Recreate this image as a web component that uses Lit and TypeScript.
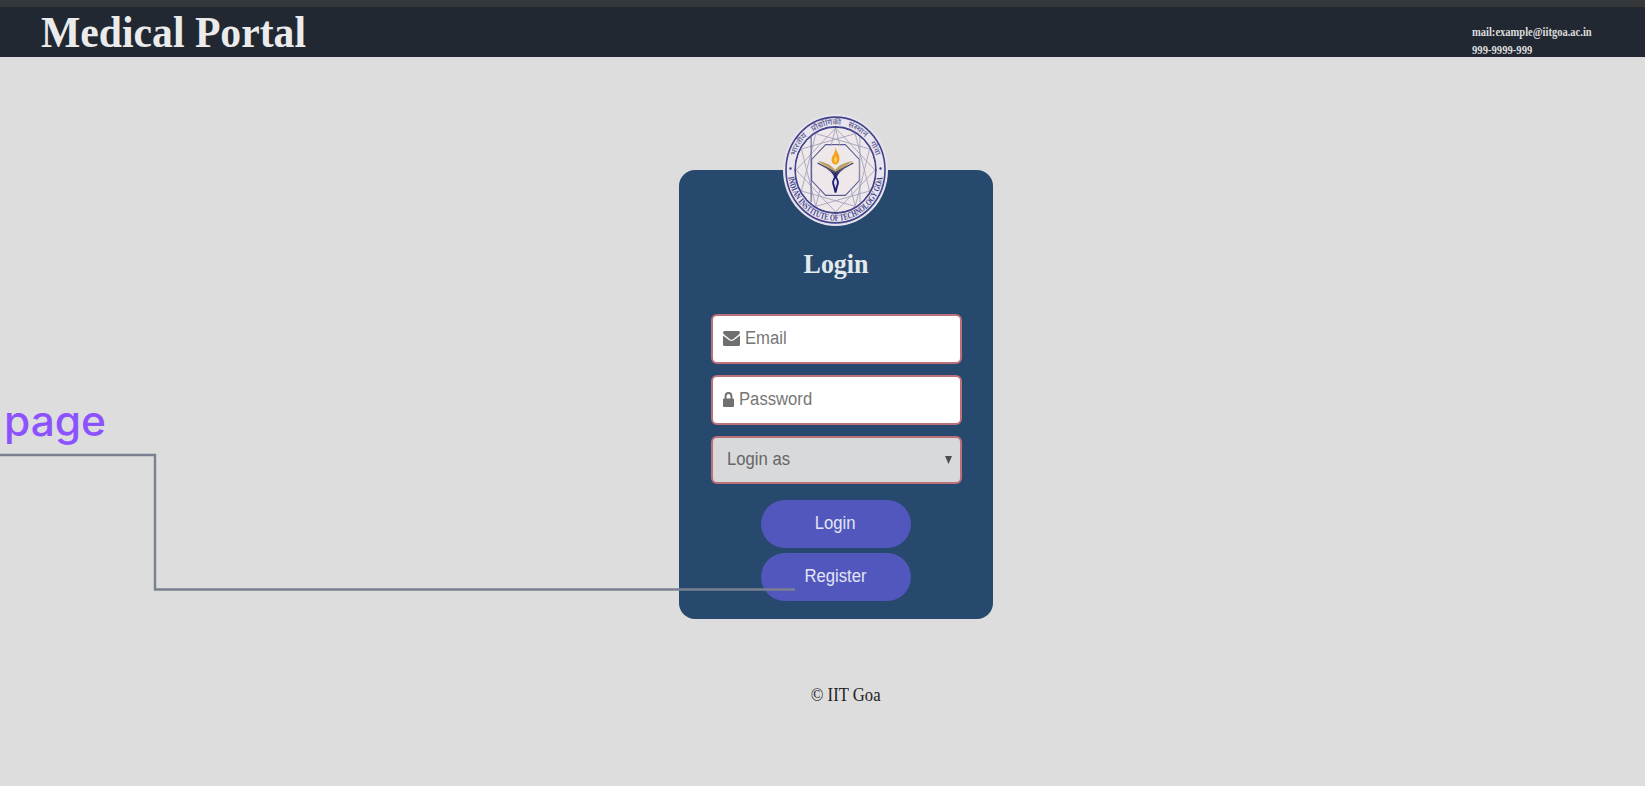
import { LitElement, html, css, svg } from "lit";
import { customElement } from "lit/decorators.js";

const star = (r: number, n: number, off: number) => {
  const p: string[] = [];
  for (let i = 0; i < n; i++) {
    const a = ((off + i * (360 / n)) * Math.PI) / 180;
    p.push(`${(r * Math.sin(a)).toFixed(2)},${(-r * Math.cos(a)).toFixed(2)}`);
  }
  return p.join(" ");
};

@customElement("institute-seal")
class InstituteSeal extends LitElement {
  static styles = css`
    :host { display: block; width: 105px; height: 112px; }
    svg { display: block; width: 100%; height: 100%; }
    .ring { fill: none; stroke: #43438a; }
    .web { fill: none; stroke: #a3a1b8; stroke-width: 0.9; }
    .octagon { fill: none; stroke: #5a5a90; stroke-width: 1.1; }
    .legend { font-family: "Liberation Serif", serif; font-weight: bold; font-size: 9.2px; fill: #42428a; }
    .hindi { font-family: "Noto Sans Devanagari", "Noto Sans", sans-serif; font-size: 8px; font-weight: 500; word-spacing: 5px; fill: #5a5a94; }
  `;
  render() {
    return html`<svg viewBox="-56 -56 112 112" preserveAspectRatio="none">
      <circle r="56" fill="#e6e3ec" />
      <circle r="52.8" fill="#e9e5ee" />
      <circle class="ring" r="52.8" stroke-width="1.7" />
      <circle class="ring" r="43" stroke-width="1.9" />
      <circle r="42" fill="#eee8eb" />
      ${svg`
        <polygon class="web" points="${star(42, 4, 0)}" />
        <polygon class="web" points="${star(42, 4, 30)}" />
        <polygon class="web" points="${star(42, 4, 60)}" />
        <polygon class="octagon" points="${star(27.5, 8, 22.5)}" />
      `}
      <path class="web" d="M0-42L-21 36M0-42L21 36" />
      <path class="octagon" d="M-26-33V32" />
      <path class="web" d="M26-33V32" />
      <circle r="24.5" fill="#eee8eb" />
      <path d="M-19-9C-12-8-5-6-.5 0C4-6 12-8 19-9L0 3Z" fill="#bca266" />
      <path d="M-19-7L0 2.500L19-7" fill="none" stroke="#34345f" stroke-width="1.300" />
      <path d="M-14-3Q-3 1-1.300 8H1.300Q3 1 14-3L0 3Z" fill="#30306d" />
      <path d="M0 6.500C3.200 11 3.200 13 1.500 16.500L0 22.500L-1.500 16.500C-3.200 13-3.200 11 0 6.500Z" fill="#e3dfed" stroke="#1f1f75" stroke-width="2" />
      <path d="M0-22.500C1-18 4.600-16 4.200-10.500C3.800-7.500 2-5.500 0-5.500C-2.500-5.500-4.200-8-4.200-10.500C-4.200-14-.5-16 0-22.500Z" fill="#f4a21e" />
      <path d="M0-14C2-11 2-9 0-7C-2-9-2-11 0-14Z" fill="#fbd45c" />
      <circle cx="-48" cy="-1.500" r="1.200" fill="#37377c" />
      <circle cx="48" cy="-1.500" r="1.200" fill="#37377c" />
      <path id="top" d="M-45.400 0A45.400 45.400 0 0 1 45.400 0" fill="none" />
      <path id="bottom" d="M-50.800 0A50.800 50.800 0 0 0 50.800 0" fill="none" />
      <text class="hindi"><textPath href="#top" startOffset="14" textLength="114" lengthAdjust="spacingAndGlyphs">भारतीय प्रौद्योगिकी संस्थान गोवा</textPath></text>
      <text class="legend"><textPath href="#bottom" startOffset="7" textLength="145" lengthAdjust="spacingAndGlyphs">INDIAN INSTITUTE OF TECHNOLOGY GOA</textPath></text>
    </svg>`;
  }
}

@customElement("app-root")
class AppRoot extends LitElement {
  static styles = css`
    :host { display: block; }
    * { box-sizing: border-box; }
    .page { position: relative; height: 786px; overflow: hidden; background: #dddddd; display: flex; flex-direction: column; font-family: "Liberation Serif", serif; }
    .strip { height: 7px; background: #34383a; flex: none; }
    .header { height: 50px; flex: none; background: #212832; color: #ebebeb; display: flex; justify-content: space-between; padding: 0 52px 0 41px; }
    .t { display: inline-block; white-space: nowrap; transform: scaleX(0.926); }
    .left { transform-origin: left; }
    .title { margin: 0; font-size: 45px; line-height: 50px; font-weight: bold; }
    .contact { width: 121px; padding-top: 16px; font-size: 11.5px; font-weight: bold; line-height: 18px; display: flex; flex-direction: column; align-items: flex-start; color: #dcdcdc; }
    .mail { transform: scaleX(0.915); }
    .card { width: 314px; height: 449px; margin: 112.5px 0 0 678.5px; flex: none; background: #26496d; border-radius: 16px; display: flex; flex-direction: column; align-items: center; }
    .seal { margin-top: -56px; flex: none; }
    .heading { margin: 20px 0 0 1px; font-size: 28px; line-height: 36px; color: #e4e9ee; }
    .form { width: 251px; margin: 32px 0 0 1px; display: flex; flex-direction: column; gap: 11px; font-family: "Liberation Sans", sans-serif; font-size: 18px; color: #767676; }
    .field { height: 50px; background: #fff; border: 2px solid #bd7079; border-radius: 6px; display: flex; align-items: center; padding: 0 8px 1px 10px; }
    .field svg { flex: none; display: block; }
    .field .t { margin-left: 5px; }
    .select { height: 48px; background: #d8d9db; justify-content: space-between; padding: 0 8px 0 14px; color: #666; }
    .field.select .t { margin-left: 0; }
    .actions { margin-top: 16px; display: flex; flex-direction: column; gap: 5px; }
    .btn { width: 150px; height: 48px; border: 0; padding: 0 0 1px; border-radius: 24px; background: #5157bd; color: #e3e5f5; font: 18px "Liberation Sans", sans-serif; }
    .footer { margin-top: 65px; padding-left: 46px; text-align: center; font-size: 18px; line-height: 22px; color: #222; }
    .note { position: absolute; left: 4px; top: 395px; font: 500 41px/52px Inter, sans-serif; color: #8c52ff; transform: scaleX(1.035); transform-origin: left; }
    .wire { position: absolute; left: 0; top: 450px; pointer-events: none; }
  `;
  render() {
    return html`<div class="page">
      <div class="strip"></div>
      <header class="header">
        <h1 class="title"><span class="t left">Medical Portal</span></h1>
        <div class="contact"><span class="t left mail">mail:example@iitgoa.ac.in</span><span class="t left">999-9999-999</span></div>
      </header>
      <main class="card">
        <institute-seal class="seal"></institute-seal>
        <h2 class="heading"><span class="t">Login</span></h2>
        <div class="form">
          <label class="field">
            <svg width="17" height="15" viewBox="0 0 17 15"><path fill="#6f6f6f" d="M1.500 0h14Q17 0 17 1.500Q16.500 3.200 15 4.300L10 8.200Q8.500 9.300 7 8.200L2 4.300Q.3 3.100 0 1.500Q0 0 1.500 0ZM0 4.400L6.200 9.300Q8.500 10.900 10.800 9.300L17 4.400V13.500Q17 15 15.500 15H1.500Q0 15 0 13.500Z"/></svg>
            <span class="t left">Email</span>
          </label>
          <label class="field">
            <svg width="11" height="15" viewBox="0 0 11 15"><path fill="#6f6f6f" fill-rule="evenodd" d="M1.600 6.500V4.300A3.900 4.300 0 0 1 9.400 4.300V6.500H10Q11 6.500 11 7.500V14Q11 15 10 15H1Q0 15 0 14V7.500Q0 6.500 1 6.500ZM3.500 6.500H7.500V4.300A2 2.300 0 0 0 3.500 4.300Z"/></svg>
            <span class="t left">Password</span>
          </label>
          <div class="field select"><span class="t left">Login as</span>
            <svg width="7" height="8" viewBox="0 0 7 8"><path fill="#4c4c4c" d="M0 0H7L3.500 8Z"/></svg>
          </div>
        </div>
        <div class="actions">
          <button class="btn"><span class="t">Login</span></button>
          <button class="btn"><span class="t">Register</span></button>
        </div>
      </main>
      <footer class="footer"><span class="t">© IIT Goa</span></footer>
      <span class="note">page</span>
      <svg class="wire" width="800" height="146"><path d="M0 5H155V139.500H795" fill="none" stroke="#7a8090" stroke-width="2.400"/></svg>
    </div>`;
  }
}
